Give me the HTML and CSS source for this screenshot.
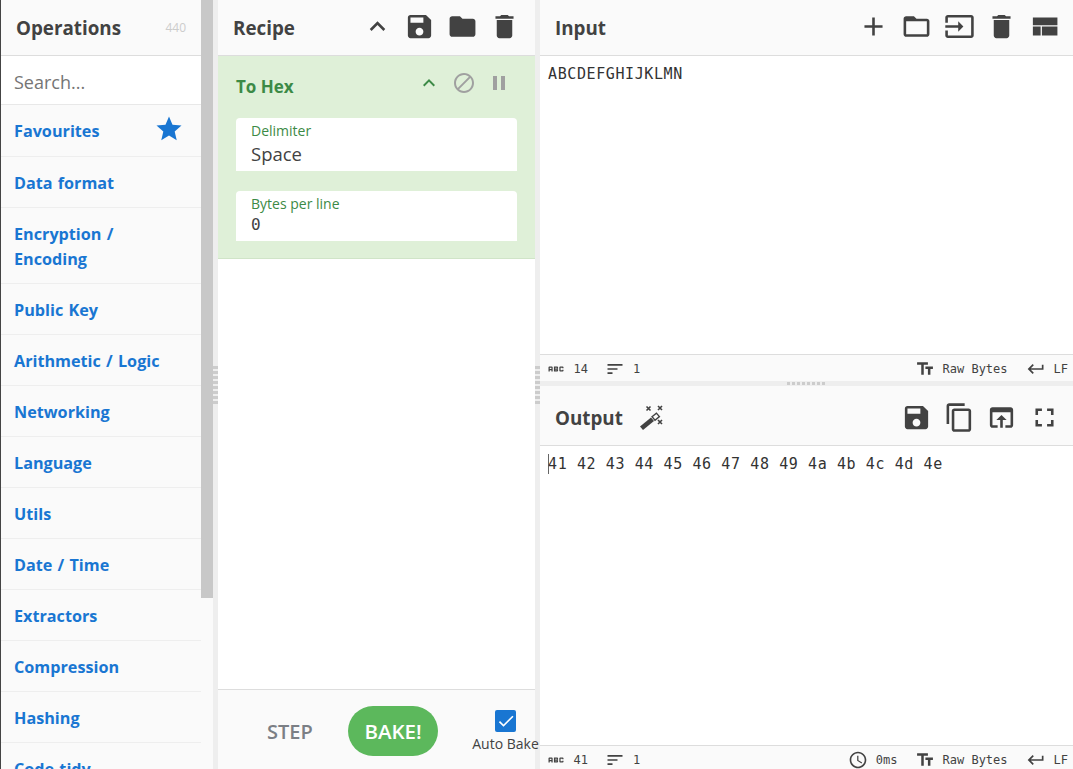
FILE: index.html
```html
<!DOCTYPE html>
<html lang="en">
<head>
<meta charset="utf-8">
<title>CyberChef</title>
<link rel="stylesheet" href="styles.css">
</head>
<body>
<div class="app">
  <section class="ops">
    <div class="ops-main">
      <header class="ops-head"><h1 class="title">Operations</h1><span class="count">440</span></header>
      <div class="search">Search...</div>
      <ul class="cats">
        <li class="cat cat-fav">Favourites<svg class="star" viewBox="0 0 24 24"><path d="M12 17.27L18.18 21l-1.64-7.03L22 9.24l-7.19-.61L12 2 9.19 8.63 2 9.24l5.46 4.73L5.82 21z"/></svg></li>
        <li class="cat">Data format</li>
        <li class="cat">Encryption /<br>Encoding</li>
        <li class="cat">Public Key</li>
        <li class="cat">Arithmetic / Logic</li>
        <li class="cat">Networking</li>
        <li class="cat">Language</li>
        <li class="cat">Utils</li>
        <li class="cat">Date / Time</li>
        <li class="cat">Extractors</li>
        <li class="cat">Compression</li>
        <li class="cat">Hashing</li>
        <li class="cat">Code tidy</li>
      </ul>
    </div>
    <div class="scrolltrack"><div class="scrollthumb"></div></div>
  </section>
  <div class="gutter-v"><span class="grip-v"></span></div>
  <section class="recipe">
    <header class="head recipe-head">
      <h2 class="title">Recipe</h2>
      <div class="tools recipe-tools">
        <svg class="ic" viewBox="0 0 24 24"><path d="M7.41 15.41L12 10.83l4.59 4.58L18 14l-6-6-6 6z"/></svg>
        <svg class="ic" viewBox="0 0 24 24"><path d="M17 3H5c-1.11 0-2 .9-2 2v14c0 1.1.89 2 2 2h14c1.1 0 2-.9 2-2V7l-4-4zm-5 16c-1.66 0-3-1.34-3-3s1.34-3 3-3 3 1.34 3 3-1.34 3-3 3zm3-10H5V5h10v4z"/></svg>
        <svg class="ic" viewBox="0 0 24 24"><path d="M10 4H4c-1.1 0-1.99.9-1.99 2L2 18c0 1.1.9 2 2 2h16c1.1 0 2-.9 2-2V8c0-1.1-.9-2-2-2h-8l-2-2z"/></svg>
        <svg class="ic" viewBox="0 0 24 24"><path d="M6 19c0 1.1.9 2 2 2h8c1.1 0 2-.9 2-2V7H6v12zM19 4h-3.5l-1-1h-5l-1 1H5v2h14V4z"/></svg>
      </div>
    </header>
    <div class="op">
      <div class="op-head">
        <span class="op-name">To Hex</span>
        <div class="op-tools">
          <svg class="ic-op ic-green" viewBox="0 0 24 24"><path d="M7.41 15.41L12 10.83l4.59 4.58L18 14l-6-6-6 6z"/></svg>
          <svg class="ic-op ic-grey" viewBox="0 0 24 24"><path d="M12 2C6.48 2 2 6.48 2 12s4.48 10 10 10 10-4.48 10-10S17.52 2 12 2zM4 12c0-4.42 3.58-8 8-8 1.85 0 3.55.63 4.9 1.69L5.69 16.9C4.63 15.55 4 13.85 4 12zm8 8c-1.85 0-3.55-.63-4.9-1.69L18.31 7.1C19.37 8.45 20 10.15 20 12c0 4.42-3.58 8-8 8z"/></svg>
          <svg class="ic-op ic-grey" viewBox="0 0 24 24"><path d="M6 19h4V5H6v14zm8-14v14h4V5h-4z"/></svg>
        </div>
      </div>
      <div class="field field-a"><span class="field-label">Delimiter</span><span class="field-value">Space</span></div>
      <div class="field field-b"><span class="field-label">Bytes per line</span><span class="field-value mono">0</span></div>
    </div>
    <div class="recipe-space"></div>
    <footer class="bake">
      <span class="step">STEP</span>
      <span class="bake-btn">BAKE!</span>
      <div class="auto">
        <span class="check"><svg viewBox="0 0 24 24"><path d="M9 16.17L4.83 12l-1.42 1.41L9 19 21 7l-1.41-1.41z"/></svg></span>
        <span class="auto-label">Auto Bake</span>
      </div>
    </footer>
  </section>
  <div class="gutter-v"><span class="grip-v"></span></div>
  <section class="io">
    <div class="pane pane-in">
      <header class="head io-head">
        <h2 class="title">Input</h2>
        <div class="tools io-tools">
          <svg class="ic" viewBox="0 0 24 24"><path d="M19 13h-6v6h-2v-6H5v-2h6V5h2v6h6v2z"/></svg>
          <svg class="ic" viewBox="0 0 24 24"><path d="M20 6h-8l-2-2H4c-1.1 0-1.99.9-1.99 2L2 18c0 1.1.9 2 2 2h16c1.1 0 2-.9 2-2V8c0-1.1-.9-2-2-2zm0 12H4V8h16v10z"/></svg>
          <svg class="ic" viewBox="0 0 24 24"><path d="M21 3.01H3c-1.1 0-2 .9-2 2V9h2V4.99h18v14.03H3V15H1v4.01c0 1.1.9 1.98 2 1.98h18c1.1 0 2-.88 2-1.98v-14c0-1.11-.9-2-2-2zM11 16l4-4-4-4v3H1v2h10v3z"/></svg>
          <svg class="ic" viewBox="0 0 24 24"><path d="M6 19c0 1.1.9 2 2 2h8c1.1 0 2-.9 2-2V7H6v12zM19 4h-3.5l-1-1h-5l-1 1H5v2h14V4z"/></svg>
          <svg class="ic" viewBox="0 0 24 24"><path d="M3 19h6v-7H3v7zm7 0h12v-7H10v7zM3 5v6h19V5H3z"/></svg>
        </div>
      </header>
      <div class="text">ABCDEFGHIJKLMN</div>
      <footer class="status">
        <svg class="ic-s" viewBox="0 0 24 24"><path d="M21 11h-1.5v-.5h-2v3h2V13H21v1c0 .55-.45 1-1 1h-3c-.55 0-1-.45-1-1v-4c0-.55.45-1 1-1h3c.55 0 1 .45 1 1v1zM8 10v5H6.5v-1.5h-2V15H3v-5c0-.55.45-1 1-1h3c.55 0 1 .45 1 1zm-1.5.5h-2V12h2v-1.5zm7 1.5c.55 0 1 .45 1 1v1c0 .55-.45 1-1 1h-4V9h4c.55 0 1 .45 1 1v1c0 .55-.45 1-1 1zM11 10.5v.75h2v-.75h-2zm2 2.25h-2v.75h2v-.75z"/></svg>
        <span class="s-val s-len">14</span>
        <svg class="ic-s" viewBox="0 0 24 24"><path d="M3 18h6v-2H3v2zM3 6v2h18V6H3zm0 7h12v-2H3v2z"/></svg>
        <span class="s-val">1</span>
        <span class="s-spacer"></span>
        <svg class="ic-s" viewBox="0 0 24 24"><path d="M2.5 4v3h5v12h3V7h5V4h-13zm19 5h-9v3h3v7h3v-7h3V9z"/></svg>
        <span class="s-val s-enc">Raw Bytes</span>
        <svg class="ic-s" viewBox="0 0 24 24"><path d="M19 7v4H5.83l3.58-3.59L8 6l-6 6 6 6 1.41-1.41L5.83 13H21V7z"/></svg>
        <span class="s-val">LF</span>
      </footer>
    </div>
    <div class="gutter-h"><span class="grip-h"></span></div>
    <div class="pane pane-out">
      <header class="head io-head out-head">
        <h2 class="title">Output</h2>
        <svg class="ic wand" viewBox="0 0 30 30"><path d="M3 24.5l11-9 3 3.5-11 9z"/><path d="M15 14.7l4.4-3.6 3 3.5-4.4 3.6z" class="wand-tip"/><path d="M9.5 5.5l4 4m0-4l-4 4M21 5l4 4m0-4l-4 4M21 19l4 4m0-4l-4 4" class="wand-spark" transform="translate(0 -1)"/></svg>
        <div class="tools out-tools">
          <svg class="ic" viewBox="0 0 24 24"><path d="M17 3H5c-1.11 0-2 .9-2 2v14c0 1.1.89 2 2 2h14c1.1 0 2-.9 2-2V7l-4-4zm-5 16c-1.66 0-3-1.34-3-3s1.34-3 3-3 3 1.34 3 3-1.34 3-3 3zm3-10H5V5h10v4z"/></svg>
          <svg class="ic" viewBox="0 0 24 24"><path d="M16 1H4c-1.1 0-2 .9-2 2v14h2V3h12V1zm3 4H8c-1.1 0-2 .9-2 2v14c0 1.1.9 2 2 2h11c1.1 0 2-.9 2-2V7c0-1.1-.9-2-2-2zm0 16H8V7h11v14z"/></svg>
          <svg class="ic" viewBox="0 0 24 24"><path d="M19 4H5c-1.11 0-2 .9-2 2v12c0 1.1.89 2 2 2h4v-2H5V8h14v10h-4v2h4c1.1 0 2-.9 2-2V6c0-1.1-.89-2-2-2zm-7 6l-4 4h3v6h2v-6h3l-4-4z"/></svg>
          <svg class="ic" viewBox="0 0 24 24"><path d="M7 14H5v5h5v-2H7v-3zm-2-4h2V7h3V5H5v5zm12 7h-3v2h5v-5h-2v3zM14 5v2h3v3h2V5h-5z"/></svg>
        </div>
      </header>
      <div class="text text-out"><span class="caret"></span>41 42 43 44 45 46 47 48 49 4a 4b 4c 4d 4e</div>
      <footer class="status">
        <svg class="ic-s" viewBox="0 0 24 24"><path d="M21 11h-1.5v-.5h-2v3h2V13H21v1c0 .55-.45 1-1 1h-3c-.55 0-1-.45-1-1v-4c0-.55.45-1 1-1h3c.55 0 1 .45 1 1v1zM8 10v5H6.5v-1.5h-2V15H3v-5c0-.55.45-1 1-1h3c.55 0 1 .45 1 1zm-1.5.5h-2V12h2v-1.5zm7 1.5c.55 0 1 .45 1 1v1c0 .55-.45 1-1 1h-4V9h4c.55 0 1 .45 1 1v1c0 .55-.45 1-1 1zM11 10.5v.75h2v-.75h-2zm2 2.25h-2v.75h2v-.75z"/></svg>
        <span class="s-val s-len">41</span>
        <svg class="ic-s" viewBox="0 0 24 24"><path d="M3 18h6v-2H3v2zM3 6v2h18V6H3zm0 7h12v-2H3v2z"/></svg>
        <span class="s-val">1</span>
        <span class="s-spacer"></span>
        <svg class="ic-s" viewBox="0 0 24 24"><path d="M11.99 2C6.47 2 2 6.48 2 12s4.47 10 9.99 10C17.52 22 22 17.52 22 12S17.52 2 11.99 2zM12 20c-4.42 0-8-3.58-8-8s3.58-8 8-8 8 3.58 8 8-3.58 8-8 8zm.5-13H11v6l5.25 3.15.75-1.23-4.5-2.67z"/></svg>
        <span class="s-val s-time">0ms</span>
        <svg class="ic-s" viewBox="0 0 24 24"><path d="M2.5 4v3h5v12h3V7h5V4h-13zm19 5h-9v3h3v7h3v-7h3V9z"/></svg>
        <span class="s-val s-enc">Raw Bytes</span>
        <svg class="ic-s" viewBox="0 0 24 24"><path d="M19 7v4H5.83l3.58-3.59L8 6l-6 6 6 6 1.41-1.41L5.83 13H21V7z"/></svg>
        <span class="s-val">LF</span>
      </footer>
    </div>
  </section>
</div>
</body>
</html>
```
FILE: styles.css
```css
* { box-sizing: border-box; }
html, body { margin: 0; height: 100%; overflow: hidden; }
body { font-family: "Open Sans", sans-serif; color: #424242; background: #fff; }
.app { display: flex; height: 769px; width: 1073px; overflow: hidden; }

.title { margin: 0; padding-top: 2px; font-size: 18.8px; font-weight: 700; line-height: 27px; color: #424242; }

/* operations */
.ops { display: flex; width: 213px; background: #fafafa; flex: none; }
.ops-main { width: 201px; border-left: 1px solid #444; display: flex; flex-direction: column; overflow: hidden; }
.ops-head { height: 56px; flex: none; display: flex; align-items: center; justify-content: space-between; padding: 0 15px; border-bottom: 1px solid #ddd; }
.count { font-size: 12px; color: #ccc; }
.search { height: 49px; flex: none; background: #fff; padding: 3px 13px 0; display: flex; align-items: center; font-size: 18px; color: #757575; border-bottom: 1px solid #e8e8e8; }
.cats { list-style: none; margin: 0; padding: 0; }
.cat { display: block; position: relative; padding: 14px 13px 11px; font-size: 16.2px; font-weight: 700; word-spacing: 1px; line-height: 25px; color: #1976d2; border-bottom: 1px solid #eee; }
.cat-fav { padding-bottom: 12px; }
.star { position: absolute; right: 17px; top: 9px; width: 30px; height: 30px; fill: #1976d2; }
.scrolltrack { width: 12px; background: #fafafa; }
.scrollthumb { height: 598px; background: #c8c8c8; }

.gutter-v { width: 5px; flex: none; background: #eee; display: flex; align-items: center; justify-content: center; }
.grip-v { width: 5px; height: 38px; background: repeating-linear-gradient(to bottom, #ccc 0 3px, transparent 3px 5px); }
.gutter-h { height: 5px; flex: none; background: #eee; display: flex; align-items: center; justify-content: center; }
.grip-h { width: 40px; height: 3px; background: repeating-linear-gradient(to right, #ccc 0 3px, transparent 3px 5px); }

/* recipe */
.recipe { width: 317px; flex: none; display: flex; flex-direction: column; }
.head { height: 56px; flex: none; display: flex; align-items: center; background: #fafafa; border-bottom: 1px solid #ddd; }
.recipe-head { padding: 0 15px; justify-content: space-between; }
.tools { display: flex; align-items: center; }
.ic { width: 31px; height: 31px; fill: #424242; flex: none; display: block; }
.recipe-tools { gap: 11.5px; margin-bottom: 3px; }
.op { height: 203px; flex: none; background: #dff0d8; border-bottom: 1px solid #d0e4c8; padding: 0 18px; }
.op-head { height: 62px; display: flex; align-items: center; justify-content: space-between; }
.op-name { font-size: 17px; font-weight: 700; color: #3c8a46; margin-bottom: 2px; }
.op-tools { display: flex; gap: 11px; margin-right: 6px; margin-bottom: 9px; align-items: center; }
.ic-op { width: 24px; height: 24px; display: block; }
.ic-green { fill: #3c8a46; }
.ic-grey { fill: #a0a0a0; }
.field { background: #fff; border-radius: 4px 4px 0 0; padding: 4px 15px 0; display: flex; flex-direction: column; }
.field-a { height: 53px; margin-bottom: 20px; }
.field-b { height: 50px; }
.field-label { font-size: 14px; line-height: 18px; color: #3c8a46; }
.field-value { font-size: 18.5px; line-height: 28px; color: #424242; }
.field-b .field-value { line-height: 24px; }
.field-value.mono { font-family: "DejaVu Sans Mono", monospace; font-size: 16px; }
.recipe-space { flex: 1; }
.bake { height: 80px; flex: none; background: #fafafa; border-top: 1px solid #ddd; display: flex; align-items: flex-start; padding: 16px 0 0 49px; }
.step { flex: none; font-size: 20px; font-weight: 600; color: #7b7f85; width: 81px; line-height: 30px; margin-top: 11px; }
.bake-btn { flex: none; width: 90px; height: 50px; border-radius: 25px; background: #5cb85c; color: #fff; font-size: 20.5px; font-weight: 600; display: flex; align-items: center; justify-content: center; }
.auto { flex: none; width: 70px; margin-left: 32.5px; display: flex; flex-direction: column; align-items: center; position: relative; z-index: 2; margin-top: 4px; }
.check { width: 21px; height: 22px; border-radius: 2px; background: #1976d2; display: flex; align-items: center; justify-content: center; }
.check svg { width: 20px; height: 20px; fill: #fff; }
.auto-label { font-size: 14px; line-height: 22px; white-space: nowrap; color: #424242; margin-top: 1px; }

/* io */
.io { flex: 1; display: flex; flex-direction: column; min-width: 0; }
.pane { display: flex; flex-direction: column; flex: none; }
.pane-in { height: 381px; }
.pane-out { height: 386px; }
.io-head { padding: 0 15px; justify-content: space-between; }
.io-tools { gap: 11.7px; margin-right: -2px; margin-bottom: 3px; }
.out-head { height: 60px; justify-content: flex-start; padding-top: 3px; }
.wand { margin-left: 14px; width: 30px; height: 30px; }
.wand-spark { fill: none; stroke: #424242; stroke-width: 1.6; }
.wand-tip { fill: none; stroke: #424242; stroke-width: 1.4; }
.out-tools { margin-left: auto; gap: 11.7px; margin-right: -2px; margin-bottom: 0; }
.text { flex: 1; font-family: "DejaVu Sans Mono", monospace; font-size: 15px; letter-spacing: 0.6px; line-height: 20px; padding: 8px 8px 0; color: #333; position: relative; white-space: pre; }
.caret { display: inline-block; width: 1px; height: 20px; background: #666; vertical-align: -5px; margin-right: -1px; }
.status { height: 27px; flex: none; background: #fafafa; border-top: 1px solid #ddd; display: flex; align-items: center; padding: 1px 5px 0 5.5px; font-family: "DejaVu Sans Mono", monospace; font-size: 12px; color: #424242; }
.ic-s { width: 20px; height: 20px; fill: #424242; flex: none; display: block; }
.s-val { margin-left: 8px; white-space: nowrap; }
.s-len { width: 31.5px; }
.s-spacer { flex: 1; }
.s-enc { margin-right: 18px; }
.s-time { margin-right: 17px; }
```
